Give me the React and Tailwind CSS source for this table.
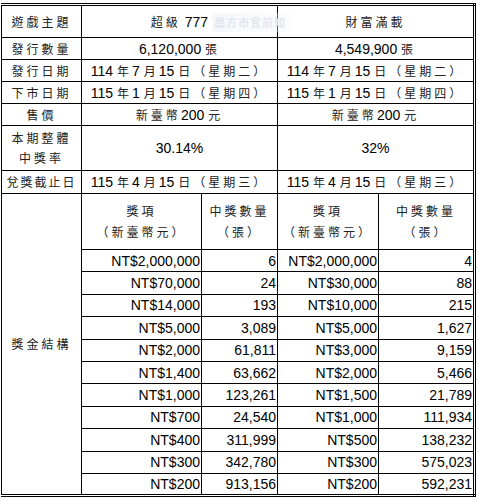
const g1 = [
  ["NT$2,000,000", "6"],
  ["NT$70,000", "24"],
  ["NT$14,000", "193"],
  ["NT$5,000", "3,089"],
  ["NT$2,000", "61,811"],
  ["NT$1,400", "63,662"],
  ["NT$1,000", "123,261"],
  ["NT$700", "24,540"],
  ["NT$400", "311,999"],
  ["NT$300", "342,780"],
  ["NT$200", "913,156"],
]

const g2 = [
  ["NT$2,000,000", "4"],
  ["NT$30,000", "88"],
  ["NT$10,000", "215"],
  ["NT$5,000", "1,627"],
  ["NT$3,000", "9,159"],
  ["NT$2,000", "5,466"],
  ["NT$1,500", "21,789"],
  ["NT$1,000", "111,934"],
  ["NT$500", "138,232"],
  ["NT$300", "575,023"],
  ["NT$200", "592,231"],
]

const Zh = ({ children }) => (
  <span className="font-['Noto_Sans_CJK_TC',sans-serif] text-[12px] tracking-[3px] text-[#222]">{children}</span>
)

const DateText = ({ y, m, d, w }) => (
  <span className="whitespace-nowrap">
    {y} <Zh>年</Zh>{m} <Zh>月</Zh>{d} <Zh>日（星期{w}）</Zh>
  </span>
)

const td = "border border-black p-0 text-center align-middle"

export default function App() {
  return (
    <div className="w-[479px] h-[501px] bg-white overflow-hidden relative font-['Liberation_Sans',sans-serif] text-[14px] text-black leading-none">
      <div className="h-[3px]" />
      <table className="table-fixed border-collapse border-t-[3px] border-r-[3px] border-b-[3px] border-double border-black ml-[1px]">
        <colgroup>
          <col className="w-[80px]" />
          <col className="w-[120px]" />
          <col className="w-[76px]" />
          <col className="w-[101px]" />
          <col className="w-[96px]" />
        </colgroup>
        <tbody>
          <tr className="h-[33px]">
            <td className={td}><Zh>遊戲主題</Zh></td>
            <td className={td} colSpan={2}><Zh>超級</Zh> 777</td>
            <td className={td} colSpan={2}><Zh>財富滿載</Zh></td>
          </tr>
          <tr className="h-[22px]">
            <td className={td}><Zh>發行數量</Zh></td>
            <td className={td} colSpan={2}>6,120,000 <Zh>張</Zh></td>
            <td className={td} colSpan={2}>4,549,900 <Zh>張</Zh></td>
          </tr>
          <tr className="h-[22px]">
            <td className={td}><Zh>發行日期</Zh></td>
            <td className={td} colSpan={2}><DateText y="114" m="7" d="15" w="二" /></td>
            <td className={td} colSpan={2}><DateText y="114" m="7" d="15" w="二" /></td>
          </tr>
          <tr className="h-[22px]">
            <td className={td}><Zh>下市日期</Zh></td>
            <td className={td} colSpan={2}><DateText y="115" m="1" d="15" w="四" /></td>
            <td className={td} colSpan={2}><DateText y="115" m="1" d="15" w="四" /></td>
          </tr>
          <tr className="h-[22px]">
            <td className={td}><Zh>售價</Zh></td>
            <td className={td} colSpan={2}><Zh>新臺幣</Zh>200 <Zh>元</Zh></td>
            <td className={td} colSpan={2}><Zh>新臺幣</Zh>200 <Zh>元</Zh></td>
          </tr>
          <tr className="h-[45px]">
            <td className={td}>
              <div className="flex flex-col items-center gap-[8px]">
                <Zh>本期整體</Zh>
                <Zh>中獎率</Zh>
              </div>
            </td>
            <td className={td} colSpan={2}>30.14%</td>
            <td className={td} colSpan={2}>32%</td>
          </tr>
          <tr className="h-[23px]">
            <td className={td}><span className="font-['Noto_Sans_CJK_TC',sans-serif] text-[12px] tracking-[2px] text-[#222]">兌獎截止日</span></td>
            <td className={td} colSpan={2}><DateText y="115" m="4" d="15" w="三" /></td>
            <td className={td} colSpan={2}><DateText y="115" m="4" d="15" w="三" /></td>
          </tr>
          <tr className="h-[56px]">
            <td className={td} rowSpan={12}><Zh>獎金結構</Zh></td>
            {[0, 1].map((k) => (
              <PrizeHead key={k} />
            ))}
          </tr>
          {g1.map((r, i) => (
            <tr key={i} className="h-[22.4px]">
              <td className={`${td} text-right pr-[1px]`}>{r[0]}</td>
              <td className={`${td} text-right pr-[1px]`}>{r[1]}</td>
              <td className={`${td} text-right pr-[1px]`}>{g2[i][0]}</td>
              <td className={`${td} text-right pr-[1px]`}>{g2[i][1]}</td>
            </tr>
          ))}
        </tbody>
      </table>
      <div className="absolute left-[212px] top-[13px] w-[80px] h-[19px] bg-gradient-to-r from-[#f2f5fa]/70 to-[#f2f5fa]/30 flex items-center justify-start pl-[2px]">
        <span className="font-['Noto_Sans_CJK_TC',sans-serif] text-[11px] font-bold text-[#e2e7ef] tracking-[1px]">晨方市宣前知</span>
      </div>
    </div>
  )
}

function PrizeHead() {
  return (
    <>
      <td className={td}>
        <div className="flex flex-col items-center gap-[9px]">
          <Zh>獎項</Zh>
          <Zh>（新臺幣元）</Zh>
        </div>
      </td>
      <td className={td}>
        <div className="flex flex-col items-center gap-[9px]">
          <Zh>中獎數量</Zh>
          <Zh>（張）</Zh>
        </div>
      </td>
    </>
  )
}
